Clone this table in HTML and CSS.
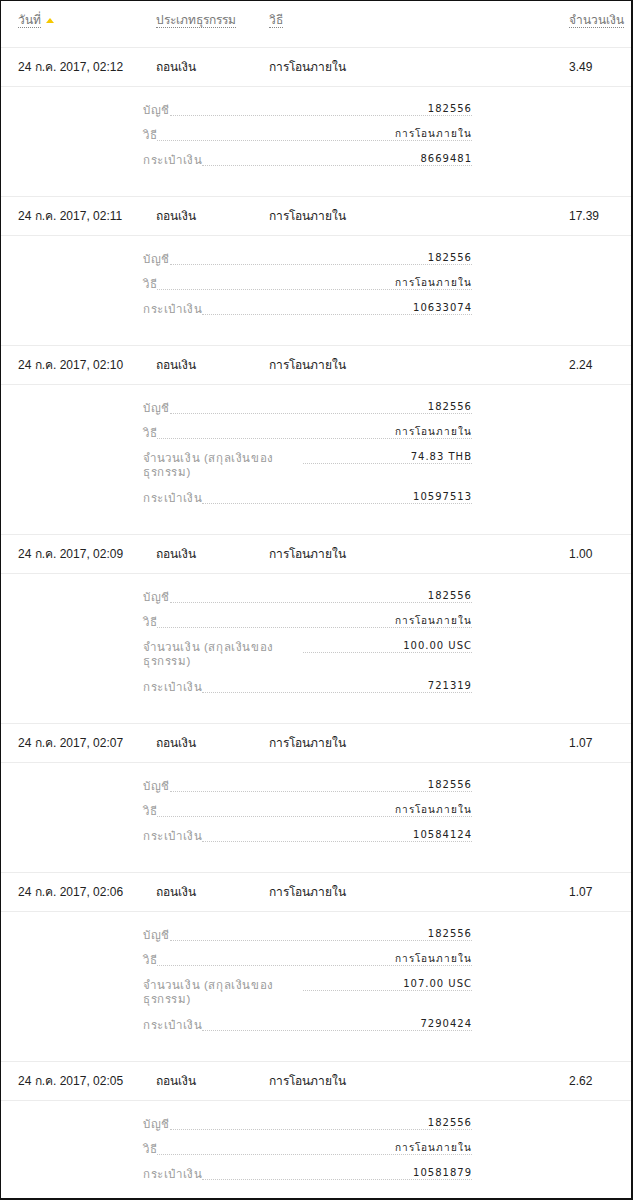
FILE: index.html
```html
<!DOCTYPE html>
<html lang="th">
<head>
<meta charset="utf-8">
<title>ประวัติธุรกรรม</title>
<link rel="stylesheet" href="styles.css">
</head>
<body>
<div class="frame">
  <div class="head">
    <span class="hcell"><span class="hlink">วันที่</span><span class="tri"></span></span>
    <span class="hcell"><span class="hlink">ประเภทธุรกรรม</span></span>
    <span class="hcell"><span class="hlink">วิธี</span></span>
    <span class="hcell"><span class="hlink">จำนวนเงิน</span></span>
  </div>

  <div class="row"><span>24 ก.ค. 2017, 02:12</span><span>ถอนเงิน</span><span>การโอนภายใน</span><span>3.49</span></div>
  <div class="detail"><div class="items">
    <div class="item"><span class="lbl">บัญชี</span><span class="fill"><span class="val">182556</span></span></div>
    <div class="item"><span class="lbl">วิธี</span><span class="fill"><span class="val">การโอนภายใน</span></span></div>
    <div class="item"><span class="lbl">กระเป๋าเงิน</span><span class="fill"><span class="val">8669481</span></span></div>
  </div></div>

  <div class="row"><span>24 ก.ค. 2017, 02:11</span><span>ถอนเงิน</span><span>การโอนภายใน</span><span>17.39</span></div>
  <div class="detail"><div class="items">
    <div class="item"><span class="lbl">บัญชี</span><span class="fill"><span class="val">182556</span></span></div>
    <div class="item"><span class="lbl">วิธี</span><span class="fill"><span class="val">การโอนภายใน</span></span></div>
    <div class="item"><span class="lbl">กระเป๋าเงิน</span><span class="fill"><span class="val">10633074</span></span></div>
  </div></div>

  <div class="row"><span>24 ก.ค. 2017, 02:10</span><span>ถอนเงิน</span><span>การโอนภายใน</span><span>2.24</span></div>
  <div class="detail"><div class="items">
    <div class="item"><span class="lbl">บัญชี</span><span class="fill"><span class="val">182556</span></span></div>
    <div class="item"><span class="lbl">วิธี</span><span class="fill"><span class="val">การโอนภายใน</span></span></div>
    <div class="item two"><span class="lbl wide">จำนวนเงิน (สกุลเงินของธุรกรรม)</span><span class="fill"><span class="val">74.83 THB</span></span></div>
    <div class="item"><span class="lbl">กระเป๋าเงิน</span><span class="fill"><span class="val">10597513</span></span></div>
  </div></div>

  <div class="row"><span>24 ก.ค. 2017, 02:09</span><span>ถอนเงิน</span><span>การโอนภายใน</span><span>1.00</span></div>
  <div class="detail"><div class="items">
    <div class="item"><span class="lbl">บัญชี</span><span class="fill"><span class="val">182556</span></span></div>
    <div class="item"><span class="lbl">วิธี</span><span class="fill"><span class="val">การโอนภายใน</span></span></div>
    <div class="item two"><span class="lbl wide">จำนวนเงิน (สกุลเงินของธุรกรรม)</span><span class="fill"><span class="val">100.00 USC</span></span></div>
    <div class="item"><span class="lbl">กระเป๋าเงิน</span><span class="fill"><span class="val">721319</span></span></div>
  </div></div>

  <div class="row"><span>24 ก.ค. 2017, 02:07</span><span>ถอนเงิน</span><span>การโอนภายใน</span><span>1.07</span></div>
  <div class="detail"><div class="items">
    <div class="item"><span class="lbl">บัญชี</span><span class="fill"><span class="val">182556</span></span></div>
    <div class="item"><span class="lbl">วิธี</span><span class="fill"><span class="val">การโอนภายใน</span></span></div>
    <div class="item"><span class="lbl">กระเป๋าเงิน</span><span class="fill"><span class="val">10584124</span></span></div>
  </div></div>

  <div class="row"><span>24 ก.ค. 2017, 02:06</span><span>ถอนเงิน</span><span>การโอนภายใน</span><span>1.07</span></div>
  <div class="detail"><div class="items">
    <div class="item"><span class="lbl">บัญชี</span><span class="fill"><span class="val">182556</span></span></div>
    <div class="item"><span class="lbl">วิธี</span><span class="fill"><span class="val">การโอนภายใน</span></span></div>
    <div class="item two"><span class="lbl wide">จำนวนเงิน (สกุลเงินของธุรกรรม)</span><span class="fill"><span class="val">107.00 USC</span></span></div>
    <div class="item"><span class="lbl">กระเป๋าเงิน</span><span class="fill"><span class="val">7290424</span></span></div>
  </div></div>

  <div class="row"><span>24 ก.ค. 2017, 02:05</span><span>ถอนเงิน</span><span>การโอนภายใน</span><span>2.62</span></div>
  <div class="detail"><div class="items">
    <div class="item"><span class="lbl">บัญชี</span><span class="fill"><span class="val">182556</span></span></div>
    <div class="item"><span class="lbl">วิธี</span><span class="fill"><span class="val">การโอนภายใน</span></span></div>
    <div class="item"><span class="lbl">กระเป๋าเงิน</span><span class="fill"><span class="val">10581879</span></span></div>
  </div></div>
</div>
</body>
</html>
```

FILE: styles.css
```css
html, body {
  margin: 0;
  padding: 0;
  background: #fff;
}
body {
  font-family: "Liberation Sans", Arial, sans-serif;
  font-size: 12px;
  color: #222;
}
.frame {
  box-sizing: border-box;
  width: 633px;
  height: 1200px;
  border: 1px solid #111;
  border-right-width: 2px;
  border-bottom-width: 2px;
  overflow: hidden;
}
.head,
.row {
  display: grid;
  grid-template-columns: 138px 113px 300px 1fr;
  padding-left: 17px;
  border-bottom: 1px solid #ececec;
  align-items: center;
}
.head {
  height: 47px;
  align-items: start;
  padding-top: 12px;
  box-sizing: border-box;
}
.hcell {
  display: flex;
  align-items: center;
  color: #777;
  line-height: 16px;
}
.hlink {
  border-bottom: 1px dotted #888;
  line-height: 14px;
}
.tri {
  width: 0;
  height: 0;
  margin-left: 5px;
  border-left: 4px solid transparent;
  border-right: 4px solid transparent;
  border-bottom: 5px solid #f5c800;
}
.row {
  height: 38px;
  line-height: 16px;
}
.detail {
  padding: 16px 0 29px 142px;
  border-bottom: 1px solid #ececec;
}
.items {
  width: 329px;
}
.item {
  display: flex;
  align-items: flex-start;
  line-height: 14px;
  margin-bottom: 11px;
}
.item.two {
  margin-bottom: 12px;
}
.item:last-child {
  margin-bottom: 0;
}
.lbl {
  flex: none;
  max-width: 160px;
  color: #9a9a9a;
  font-size: 11.5px;
  letter-spacing: 0.6px;
}
.lbl.wide {
  width: 160px;
}
.fill {
  flex: 1;
  display: flex;
  justify-content: flex-end;
  border-bottom: 1px dotted #c8c8c8;
  height: 12px;
  line-height: 12px;
}
.val {
  color: #222;
  font-size: 10px;
  letter-spacing: 1px;
  font-family: "DejaVu Sans", "Liberation Sans", sans-serif;
}
```
